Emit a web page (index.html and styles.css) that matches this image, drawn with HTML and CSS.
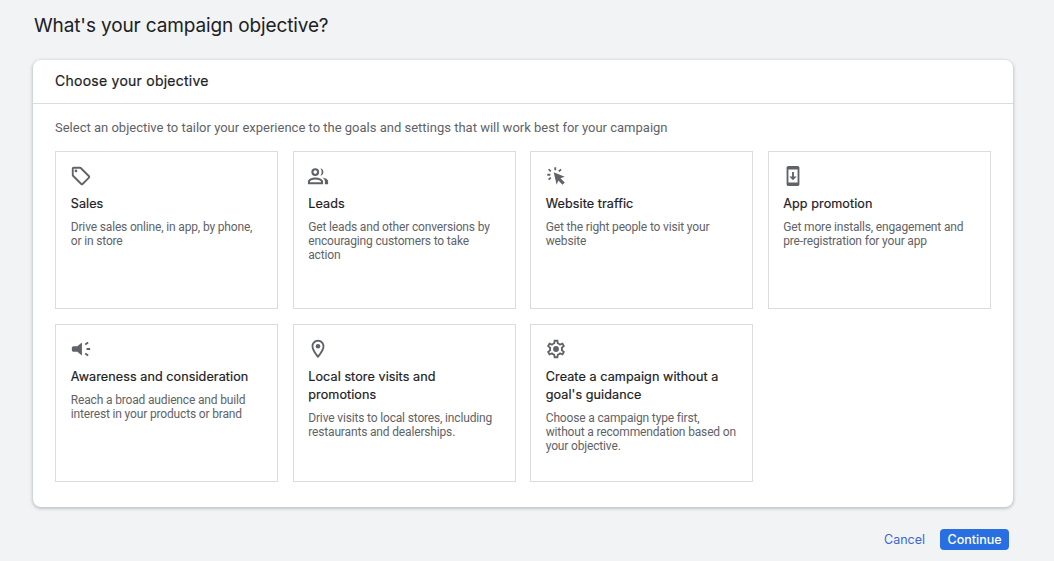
FILE: index.html
```html
<!DOCTYPE html>
<html lang="en">
<head>
<meta charset="utf-8">
<title>Campaign objective</title>
<link rel="stylesheet" href="styles.css">
</head>
<body>
<h1 class="page-title">What's your campaign objective?</h1>
<section class="panel">
  <h2 class="panel-head">Choose your objective</h2>
  <div class="panel-body">
    <p class="intro">Select an objective to tailor your experience to the goals and settings that will work best for your campaign</p>
    <div class="grid">
      <article class="card">
        <svg class="icon" viewBox="0 0 24 24"><path d="M21.41 11.58l-9-9C12.05 2.22 11.55 2 11 2H4c-1.1 0-2 .9-2 2v7c0 .55.22 1.05.59 1.42l9 9c.36.36.86.58 1.41.58s1.05-.22 1.41-.59l7-7c.37-.36.59-.86.59-1.41s-.23-1.06-.59-1.42zM13 20.01L4 11V4h7v-.01l9 9-7 7.02z"/><circle cx="6.5" cy="6.5" r="1.5"/></svg>
        <h3 class="card-title">Sales</h3>
        <p class="card-text">Drive sales online, in app, by phone, or in store</p>
      </article>
      <article class="card">
        <svg class="icon" viewBox="0 0 24 24"><path d="M9 3.500a4.250 4.250 0 1 0 0 8.500 4.250 4.250 0 0 0 0-8.500zm0 2.300a1.950 1.950 0 1 1 0 3.900 1.950 1.950 0 0 1 0-3.900zM14.500 3.600a4.250 4.250 0 0 1 0 8.300c1-1.100 1.500-2.600 1.500-4.150s-.5-3.050-1.500-4.150zM9 13.500c-2.800 0-8 1.400-8 4.100V21h16.500v-3.400c0-2.700-5.700-4.100-8.500-4.100zm0 2.300c2.500 0 5.700 1.100 6.200 1.900v1H3.300v-1c.5-.8 3.200-1.900 5.700-1.900zM16.500 13.600c2.200.4 6.500 1.500 6.500 4V21h-3.500v-3.400c0-1.600-1.300-3-3-4z"/></svg>
        <h3 class="card-title">Leads</h3>
        <p class="card-text">Get leads and other conversions by encouraging customers to take action</p>
      </article>
      <article class="card">
        <svg class="icon" viewBox="0 0 24 24"><path d="M9.500 8l12 4.700-4.600 1.800 4.600 4.600-2.400 2.400-4.600-4.600-1.800 4.600zM10.200 2.500h2v3.300h-2zM2.500 9.600h3.300v2h-3.300zM4.600 4l2.400 2.300-1.400 1.400-2.300-2.400zM16.800 4l1.400 1.400-2.400 2.300-1.400-1.400zM5.600 13l1.400 1.400-2.400 2.300-1.300-1.400z"/></svg>
        <h3 class="card-title">Website traffic</h3>
        <p class="card-text">Get the right people to visit your website</p>
      </article>
      <article class="card">
        <svg class="icon" viewBox="0 0 24 24"><path d="M17 1.010L7 1c-1.100 0-2 .9-2 2v18c0 1.100.9 2 2 2h10c1.100 0 2-.9 2-2V3c0-1.100-.9-1.990-2-1.990zM17 19H7V5h10v14zM16 12.500h-3V7.500h-2v5H8l4 4 4-4z"/></svg>
        <h3 class="card-title">App promotion</h3>
        <p class="card-text">Get more installs, engagement and pre-registration for your app</p>
      </article>
      <article class="card">
        <svg class="icon" viewBox="0 0 24 24"><path d="M18 11v2h4v-2h-4zm-2 6.610c.96.710 2.210 1.650 3.200 2.390.4-.53.8-1.070 1.200-1.600-.99-.74-2.240-1.680-3.200-2.400-.4.54-.8 1.080-1.200 1.610zM20.400 5.600c-.4-.53-.8-1.070-1.200-1.600-.99.74-2.240 1.680-3.200 2.400.4.53.8 1.070 1.200 1.600.96-.72 2.210-1.650 3.200-2.400zM4 9c-1.100 0-2 .9-2 2v2c0 1.100.9 2 2 2h4l5 4V5L8 9H4z"/></svg>
        <h3 class="card-title">Awareness and consideration</h3>
        <p class="card-text">Reach a broad audience and build interest in your products or brand</p>
      </article>
      <article class="card">
        <svg class="icon" viewBox="0 0 24 24"><path d="M12 2C8.130 2 5 5.130 5 9c0 5.250 7 13 7 13s7-7.750 7-13c0-3.870-3.130-7-7-7zM7 9c0-2.760 2.240-5 5-5s5 2.240 5 5c0 2.880-2.880 7.190-5 9.880C9.920 16.210 7 11.850 7 9z"/><circle cx="12" cy="9" r="2.500"/></svg>
        <h3 class="card-title">Local store visits and promotions</h3>
        <p class="card-text">Drive visits to local stores, including restaurants and dealerships.</p>
      </article>
      <article class="card">
        <svg class="icon" viewBox="0 0 24 24"><path d="M19.430 12.980c.04-.32.07-.64.07-.98 0-.34-.03-.66-.07-.98l2.110-1.650c.19-.15.24-.42.12-.64l-2-3.460c-.09-.16-.26-.25-.44-.25-.06 0-.12.01-.17.03l-2.490 1c-.52-.4-1.080-.73-1.690-.98l-.38-2.650C14.460 2.180 14.250 2 14 2h-4c-.25 0-.46.18-.49.42l-.38 2.650c-.61.25-1.170.59-1.690.98l-2.490-1c-.06-.02-.12-.03-.18-.03-.17 0-.34.09-.43.25l-2 3.460c-.13.22-.07.49.12.64l2.110 1.650c-.04.32-.07.65-.07.98 0 .33.03.66.07.98l-2.110 1.650c-.19.15-.24.42-.12.64l2 3.460c.09.16.26.25.44.25.06 0 .12-.01.17-.03l2.490-1c.52.4 1.080.73 1.690.98l.38 2.650c.03.24.24.42.49.42h4c.25 0 .46-.18.49-.42l.38-2.650c.61-.25 1.170-.59 1.690-.98l2.490 1c.06.02.12.03.18.03.17 0 .34-.09.43-.25l2-3.460c.12-.22.07-.49-.12-.64l-2.110-1.650zm-1.980-1.710c.04.31.05.52.05.73 0 .21-.02.43-.05.73l-.14 1.130.89.7 1.080.84-.7 1.210-1.270-.51-1.040-.42-.9.68c-.43.32-.84.56-1.250.73l-1.060.43-.16 1.130-.2 1.350h-1.400l-.19-1.350-.16-1.130-1.060-.43c-.43-.18-.83-.41-1.230-.71l-.91-.7-1.060.43-1.270.51-.7-1.210 1.080-.84.89-.7-.14-1.130c-.03-.31-.05-.54-.05-.74s.02-.43.05-.73l.14-1.130-.89-.7-1.080-.84.7-1.210 1.270.51 1.040.42.9-.68c.43-.32.84-.56 1.250-.73l1.060-.43.16-1.130.2-1.350h1.390l.19 1.350.16 1.130 1.060.43c.43.18.83.41 1.230.71l.91.7 1.060-.43 1.270-.51.7 1.210-1.070.85-.89.7.14 1.130z"/><circle cx="12" cy="12" r="3.200"/></svg>
        <h3 class="card-title">Create a campaign without a goal's guidance</h3>
        <p class="card-text">Choose a campaign type first, without a recommendation based on your objective.</p>
      </article>
    </div>
  </div>
</section>
<footer class="actions">
  <button class="btn-text" type="button">Cancel</button>
  <button class="btn-primary" type="button">Continue</button>
</footer>
</body>
</html>
```
FILE: styles.css
```css
* { box-sizing: border-box; }
html, body { height: 100%; }
body {
  margin: 0;
  background: #f1f3f4;
  font-family: Roboto, "Liberation Sans", sans-serif;
  color: #202124;
  overflow: hidden;
}
.page-title {
  margin: 0;
  padding: 13px 0 0 34px;
  height: 60px;
  font: 400 19px/26px Inter, Roboto, sans-serif;
  color: #202124;
  letter-spacing: -0.13px;
}
.panel {
  margin-left: 33px;
  width: 980px;
  height: 447px;
  background: #fff;
  border-radius: 8px;
  box-shadow: 0 1px 3px 1px rgba(60, 64, 67, .25);
}
.panel-head {
  margin: 0;
  height: 44px;
  padding: 12px 22px 0;
  border-bottom: 1px solid #dadce0;
  font: 400 14px/18px Inter, Roboto, sans-serif;
  letter-spacing: .25px;
  color: #202124;
  -webkit-text-stroke: .2px #202124;
}
.panel-body { padding: 16px 22px 0; }
.intro {
  margin: 0 0 15px;
  font-size: 13px;
  line-height: 16px;
  color: #5f6368;
}
.grid {
  display: grid;
  grid-template-columns: repeat(4, 223px);
  grid-auto-rows: 158px;
  column-gap: 14.500px;
  row-gap: 15px;
}
.card {
  border: 1px solid #dadce0;
  padding: 13px 15px 0 14.750px;
  background: #fff;
}
.icon {
  display: block;
  width: 22px;
  height: 22px;
  margin: 0 0 8px -1px;
  fill: #5f6368;
}
.card-title {
  margin: 0 0 7px;
  font: 400 12.600px/18px Inter, Roboto, sans-serif;
  letter-spacing: .08px;
  color: #202124;
  -webkit-text-stroke: .2px #202124;
}
.card-text {
  margin: 0;
  font-size: 12px;
  line-height: 14px;
  letter-spacing: -.16px;
  color: #5f6368;
}
.actions {
  display: flex;
  justify-content: flex-end;
  align-items: center;
  gap: 15px;
  padding: 22px 45px 0 0;
}
.btn-text, .btn-primary {
  border: 0;
  border-radius: 4px;
  height: 21px;
  font: 500 12.500px/21px Inter, Roboto, sans-serif;
}
.btn-text {
  padding: 0;
  background: none;
  color: #3b67d0;
  font-weight: 400;
}
.btn-primary {
  width: 69px;
  padding: 0;
  background: #2a6fe2;
  color: #fff;
}
```
